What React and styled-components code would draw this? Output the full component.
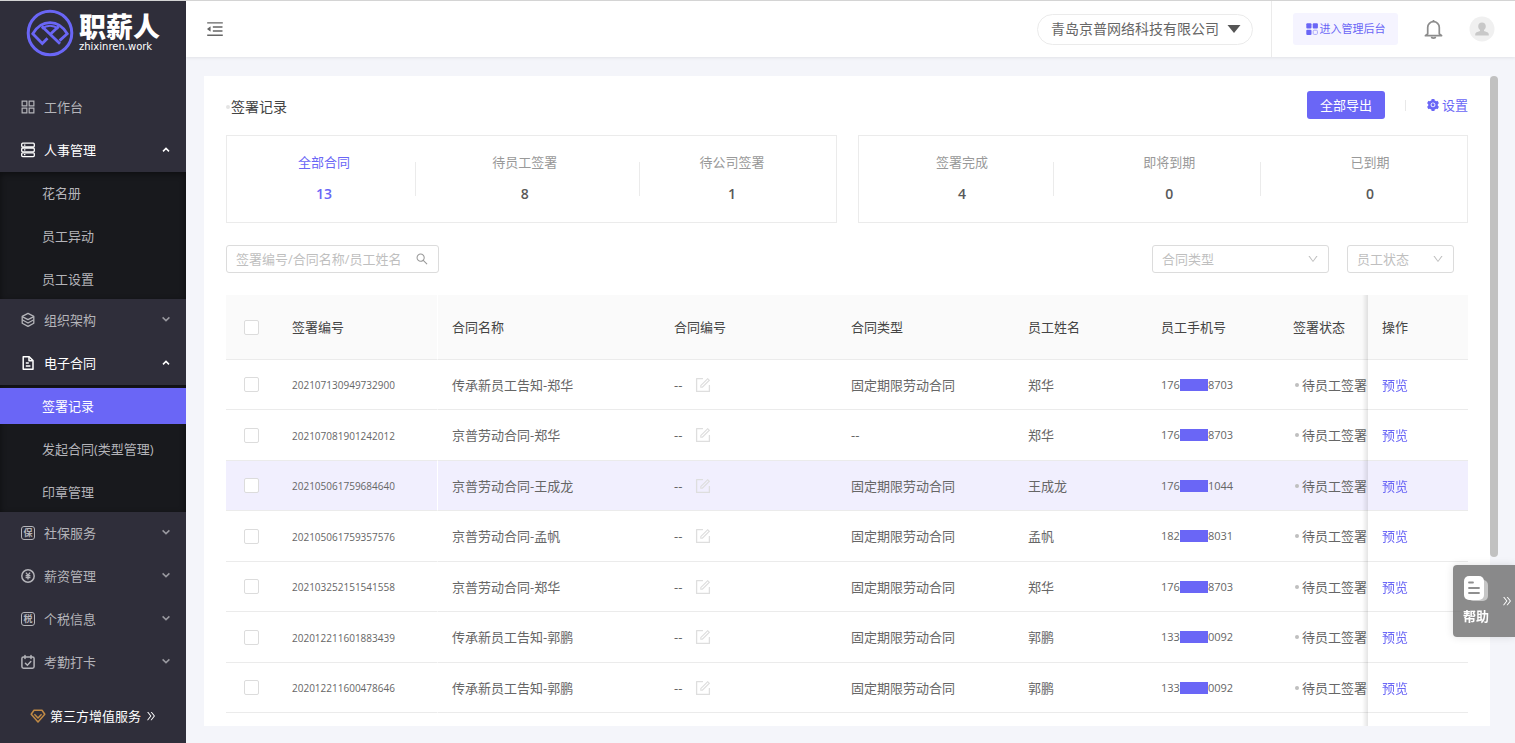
import React, { Fragment, useState } from 'react';
import styled, { createGlobalStyle, css } from 'styled-components';
import {
  AiFillSetting,
  AiOutlineAppstore,
  AiOutlineDoubleRight,
  AiOutlineDown,
  AiOutlineForm,
  AiOutlineMenuFold,
  AiOutlineSearch,
} from 'react-icons/ai';

const stats = [
  [
    { label: '全部合同', value: 13 },
    { label: '待员工签署', value: 8 },
    { label: '待公司签署', value: 1 },
  ],
  [
    { label: '签署完成', value: 4 },
    { label: '即将到期', value: 0 },
    { label: '已到期', value: 0 },
  ],
];

const records = [
  { id: '202107130949732900', name: '传承新员工告知-郑华', type: '固定期限劳动合同', staff: '郑华', phone: ['176', '8703'] },
  { id: '202107081901242012', name: '京普劳动合同-郑华', type: '--', staff: '郑华', phone: ['176', '8703'] },
  { id: '202105061759684640', name: '京普劳动合同-王成龙', type: '固定期限劳动合同', staff: '王成龙', phone: ['176', '1044'] },
  { id: '202105061759357576', name: '京普劳动合同-孟帆', type: '固定期限劳动合同', staff: '孟帆', phone: ['182', '8031'] },
  { id: '202103252151541558', name: '京普劳动合同-郑华', type: '固定期限劳动合同', staff: '郑华', phone: ['176', '8703'] },
  { id: '202012211601883439', name: '传承新员工告知-郭鹏', type: '固定期限劳动合同', staff: '郭鹏', phone: ['133', '0092'] },
  { id: '202012211600478646', name: '传承新员工告知-郭鹏', type: '固定期限劳动合同', staff: '郭鹏', phone: ['133', '0092'] },
];

// icons
const StaffIcon = () => (
  <svg width="16" height="16" viewBox="0 0 16 16" fill="none" stroke="currentColor" strokeWidth="1.3">
    <rect x="1.7" y="1.2" width="12.6" height="3.8" rx="1" />
    <rect x="1.7" y="6" width="12.6" height="3.8" rx="1" />
    <rect x="1.7" y="10.8" width="12.6" height="3.8" rx="1" />
    <path d="M4 3.1h1.4M4 7.9h1.4M4 12.7h1.4" />
  </svg>
);

const LayersIcon = () => (
  <svg width="16" height="16" viewBox="0 0 16 16" fill="none" stroke="currentColor" strokeWidth="1.3" strokeLinejoin="round">
    <path d="M8 1.4 13.8 4.4v6.800L8 14.400l-5.800-3.200V4.400z" />
    <path d="M2.200 4.600 8 7.600l5.800-3M2.200 7.800 8 11l5.800-3.200" />
  </svg>
);

const FileIcon = () => (
  <svg width="16" height="16" viewBox="0 0 16 16" fill="none" stroke="currentColor" strokeWidth="1.5" strokeLinejoin="round">
    <path d="M3.2 1.8h6l3.8 3.8v8.600H3.2z" />
    <path d="M9 2v3.8h3.8M5.8 8h3M5.8 11h4.600" />
  </svg>
);

const SalaryIcon = () => (
  <svg width="16" height="16" viewBox="0 0 16 16" fill="none" stroke="currentColor" strokeWidth="1.5">
    <circle cx="8" cy="8" r="6.2" />
    <path d="M5.9 4.6 8 7.2l2.1-2.6M8 7v4.6M5.6 7.6h4.8M5.6 9.5h4.8" strokeWidth="1.3" />
  </svg>
);

const ClockInIcon = () => (
  <svg width="16" height="16" viewBox="0 0 16 16" fill="none" stroke="currentColor" strokeWidth="1.5" strokeLinecap="round">
    <rect x="1.9" y="3" width="12.2" height="11.2" rx="1.6" />
    <path d="M5 1.4v3M11 1.4v3M5.4 9.2l2 2 3.4-3.6" />
  </svg>
);

const GemIcon = () => (
  <svg width="16" height="16" viewBox="0 0 16 16" fill="none" stroke="#c08a45" strokeWidth="1.5" strokeLinejoin="round">
    <path d="M4 2.2h8l2.8 4L8 14 1.2 6.2z" />
    <path d="M4.4 6.2 8 10l3.6-3.8" />
  </svg>
);

const Chevron = ({ open }) => (
  <svg width="10" height="10" viewBox="0 0 10 10" fill="none" stroke="currentColor" strokeWidth="1.5" opacity={open ? 1 : 0.8}>
    <path d={open ? 'M2 6.4 5 3.4l3 3' : 'M1.6 2.4 5 5.6l3.4-3.2'} />
  </svg>
);

const LogoMark = () => (
  <svg width="48" height="48" viewBox="0 0 48 48" fill="none" stroke="#6a66f6" strokeWidth="2.8">
    <circle cx="24" cy="24" r="21.8" strokeWidth="3" />
    <path d="M21.500 29.200 16.300 34.400 6.800 24.800C15.600 10 32.400 10 41.200 24.800L33.600 31.600" />
    <path d="M15.800 17.200 34 34.800M32.800 17.200 24.600 25" />
    <path d="M15.800 19.600c5-3.400 11.400-3.400 16.600 0" strokeWidth="2" />
  </svg>
);

const BellIcon = () => (
  <svg width="19" height="22" viewBox="0 0 20 22" fill="none" stroke="#8c8c8c" strokeWidth="1.8" strokeLinejoin="round">
    <path d="M3.900 16V9.400a6.100 6.100 0 0 1 12.200 0V16l2.400 2H1.500z" />
    <path d="M10 3.2V1.6M8 19.2a2 1.400 0 0 0 4 0" />
  </svg>
);

const AvatarIcon = () => (
  <svg width="26" height="26" viewBox="0 0 26 26">
    <circle cx="13" cy="13" r="12.5" fill="#f0f0f0" />
    <path fill="#c8c8c8" d="M13 6.4c2.3 0 3.8 1.6 3.8 3.8 0 1.7-.8 3-1.8 3.8v1.1c1.6.6 4 1 4.6 2.5.2.5.2 1.2.2 1.900H6.2c0-.7 0-1.4.2-1.900.6-1.5 3-1.9 4.6-2.5V14c-1-.8-1.8-2.1-1.8-3.8 0-2.2 1.5-3.800 3.800-3.800z" />
  </svg>
);

const BlocksIcon = () => (
  <svg width="12" height="12" viewBox="0 0 12 12" fill="#6a66f6">
    <rect x="0.3" y="0.3" width="5.2" height="5.2" rx="1" />
    <rect x="6.7" y="0.3" width="5.2" height="5.2" rx="1" />
    <rect x="0.3" y="6.7" width="5.2" height="5.2" rx="1" />
    <rect x="7.2" y="7.2" width="4.2" height="4.2" rx="1" fill="none" stroke="#aaa7fa" />
  </svg>
);

const HelpIcon = () => (
  <svg width="26" height="26" viewBox="0 0 26 26">
    <rect x="5" y="4" width="20" height="21" rx="5" fill="#c6c6c6" />
    <rect x="1" y="0" width="20" height="24" rx="5" fill="#fff" />
    <path d="M6 6.5h4M6 12h10M6 17h10" stroke="#8f8f8f" strokeWidth="1.8" strokeLinecap="round" />
  </svg>
);

const menu = [
  { label: '工作台', icon: <AiOutlineAppstore size={18} /> },
  { label: '人事管理', icon: <StaffIcon />, children: ['花名册', '员工异动', '员工设置'] },
  { label: '组织架构', icon: <LayersIcon />, folded: true },
  { label: '电子合同', icon: <FileIcon />, children: ['签署记录', '发起合同(类型管理)', '印章管理'] },
  { label: '社保服务', badge: '保', folded: true },
  { label: '薪资管理', icon: <SalaryIcon />, folded: true },
  { label: '个税信息', badge: '税', folded: true },
  { label: '考勤打卡', icon: <ClockInIcon />, folded: true },
];

const Sidebar = () => {
  const [current, setCurrent] = useState('签署记录');

  return (
    <Aside>
      <Logo>
        <LogoMark />
        <LogoText>
          <LogoName>职薪人</LogoName>
          <LogoSite>zhixinren.work</LogoSite>
        </LogoText>
      </Logo>
      <Nav>
        {menu.map(({ label, icon, badge, children, folded }) => (
          <Fragment key={label}>
            <MenuButton type="button" $open={!!children}>
              <MenuIcon>{badge ? <CharBadge>{badge}</CharBadge> : icon}</MenuIcon>
              <MenuLabel>{label}</MenuLabel>
              {(children || folded) && <Chevron open={!!children} />}
            </MenuButton>
            {children && (
              <SubMenu>
                {children.map((item) => (
                  <SubButton key={item} type="button" $active={item === current} onClick={() => setCurrent(item)}>
                    {item}
                  </SubButton>
                ))}
              </SubMenu>
            )}
          </Fragment>
        ))}
      </Nav>
      <ExtraLink href="#services">
        <GemIcon />
        第三方增值服务
        <AiOutlineDoubleRight size={12} />
      </ExtraLink>
    </Aside>
  );
};

const TopBar = () => (
  <Header>
    <IconButton type="button" aria-label="收起菜单">
      <AiOutlineMenuFold size={20} />
    </IconButton>
    <HeaderRight>
      <Company>
        <CompanySelect aria-label="公司">
          <option>青岛京普网络科技有限公司</option>
        </CompanySelect>
        <svg width="14" height="10" viewBox="0 0 14 10">
          <path d="M0.5 1h13L7 9z" fill="#555" />
        </svg>
      </Company>
      <Account>
        <AdminButton type="button">
          <BlocksIcon />
          进入管理后台
        </AdminButton>
        <IconButton type="button" aria-label="消息">
          <BellIcon />
        </IconButton>
        <IconButton type="button" aria-label="账号">
          <AvatarIcon />
        </IconButton>
      </Account>
    </HeaderRight>
  </Header>
);

const RecordTable = () => (
  <Table>
    <colgroup>
      <Col $width={52} />
      <Col $width={160} />
      <Col />
      <Col $width={177} />
      <Col $width={177} />
      <Col $width={133} />
      <Col $width={132} />
      <Col $width={89} />
      <Col $width={100} />
    </colgroup>
    <thead>
      <tr>
        <Th $check><Checkbox aria-label="全选" /></Th>
        <Th $edge>签署编号</Th>
        <Th>合同名称</Th>
        <Th>合同编号</Th>
        <Th>合同类型</Th>
        <Th>员工姓名</Th>
        <Th>员工手机号</Th>
        <Th>签署状态</Th>
        <Th $fixed>操作</Th>
      </tr>
    </thead>
    <tbody>
      {records.map(({ id, name, type, staff, phone }, i) => (
        <Row key={id} $hover={i === 2}>
          <Td $check><Checkbox aria-label={id} /></Td>
          <Td $edge><Serial>{id}</Serial></Td>
          <Td>{name}</Td>
          <Td>
            <Editable>
              --
              <EditButton type="button" aria-label="编辑"><AiOutlineForm size={18} /></EditButton>
            </Editable>
          </Td>
          <Td>{type}</Td>
          <Td>{staff}</Td>
          <Td>
            <Phone>{phone[0]}<Mask />{phone[1]}</Phone>
          </Td>
          <Td><Status>待员工签署</Status></Td>
          <Td $fixed><TextLink href="#preview">预览</TextLink></Td>
        </Row>
      ))}
      <Row>
        <Td colSpan={8} />
        <Td $fixed />
      </Row>
    </tbody>
  </Table>
);

const App = () => (
  <Layout>
    <GlobalStyle />
    <Sidebar />
    <Content>
      <TopBar />
      <Main>
        <Card>
          <TitleRow>
            <Title>签署记录</Title>
            <Actions>
              <ExportButton type="button">全部导出</ExportButton>
              <Separator />
              <SettingButton type="button">
                <AiFillSetting size={14} />
                设置
              </SettingButton>
            </Actions>
          </TitleRow>
          <StatRow>
            {stats.map((group, g) => (
              <StatGroup key={g}>
                {group.map(({ label, value }, i) => (
                  <Stat key={label} $active={g === 0 && i === 0}>
                    <StatLabel>{label}</StatLabel>
                    <StatValue>{value}</StatValue>
                  </Stat>
                ))}
              </StatGroup>
            ))}
          </StatRow>
          <FilterRow>
            <SearchBox>
              <SearchInput aria-label="搜索" placeholder="签署编号/合同名称/员工姓名" />
              <AiOutlineSearch size={14} />
            </SearchBox>
            <Filters>
              <SelectBox $width={177}>
                <Select aria-label="合同类型"><option>合同类型</option></Select>
                <AiOutlineDown size={12} />
              </SelectBox>
              <SelectBox $width={107}>
                <Select aria-label="员工状态"><option>员工状态</option></Select>
                <AiOutlineDown size={12} />
              </SelectBox>
            </Filters>
          </FilterRow>
          <RecordTable />
        </Card>
        <ScrollTrack><ScrollThumb /></ScrollTrack>
      </Main>
    </Content>
    <Help type="button">
      <HelpBody>
        <HelpIcon />
        帮助
      </HelpBody>
      <AiOutlineDoubleRight size={12} />
    </Help>
  </Layout>
);

const GlobalStyle = createGlobalStyle`
  * {
    box-sizing: border-box;
  }

  body {
    margin: 0;
    color: #666;
    font-family: "Open Sans", "Noto Sans CJK SC", sans-serif;
    font-size: 13px;
    line-height: 20px;
    background: #f4f5fa;
  }

  button, input, select {
    padding: 0;
    border: none;
    outline: none;
    background: none;
    color: inherit;
    font: inherit;
  }

  button {
    cursor: pointer;
  }

  svg {
    flex: none;
  }
`;

const Layout = styled.div`
  display: flex;
  height: 100vh;
  border-top: 1px solid #d4d4d4;
  overflow: hidden;
`;

// sidebar
const Aside = styled.aside`
  display: flex;
  flex-direction: column;
  flex: none;
  width: 186px;
  color: #b4b4b9;
  background: #2f2e3a;
`;

const Logo = styled.div`
  display: flex;
  align-items: center;
  gap: 5px;
  height: 64px;
  margin-bottom: 21px;
  padding-left: 26px;
  color: #fff;
`;

const LogoText = styled.div`
  display: flex;
  flex-direction: column;
`;

const LogoName = styled.span`
  font-size: 27px;
  font-weight: 900;
  line-height: 28px;
`;

const LogoSite = styled.span`
  font-family: "DejaVu Sans", sans-serif;
  font-size: 10px;
  line-height: 12px;
`;

const Nav = styled.nav`
  display: flex;
  flex-direction: column;
  flex: 1;
  min-height: 0;
`;

const MenuButton = styled.button`
  display: flex;
  align-items: center;
  flex: 0 1 43px;
  padding: 0 15px 0 20px;
  color: ${({ $open }) => $open ? '#fff' : 'inherit'};
  text-align: left;
`;

const MenuIcon = styled.span`
  display: flex;
  align-items: center;
  justify-content: center;
  width: 16px;
  margin-right: 8px;
`;

const MenuLabel = styled.span`
  flex: 1;
`;

const CharBadge = styled.span`
  width: 14px;
  height: 14px;
  border: 1px solid currentColor;
  border-radius: 3px;
  font-size: 9px;
  font-weight: 700;
  line-height: 11px;
  text-align: center;
`;

const SubMenu = styled.div`
  display: flex;
  flex-direction: column;
  flex: none;
  gap: 7px;
  padding: 3px 0 2px;
  background: #18191d;
  box-shadow: inset 0 2px 6px rgba(0, 0, 0, 0.45);
`;

const SubButton = styled.button`
  height: 36px;
  padding-left: 42px;
  text-align: left;
  ${({ $active }) => $active && css`
    color: #fff;
    background: #6a66f6;
  `}
`;

const ExtraLink = styled.a`
  display: flex;
  align-items: center;
  gap: 4px;
  height: 60px;
  padding: 6px 0 0 30px;
  color: #fff;
  text-decoration: none;
`;

// header
const Content = styled.div`
  display: flex;
  flex-direction: column;
  flex: 1;
  min-width: 0;
`;

const Header = styled.header`
  display: flex;
  align-items: center;
  justify-content: space-between;
  flex: none;
  height: 56px;
  padding: 0 20px 0 19px;
  background: #fff;
  box-shadow: 0 1px 3px rgba(0, 0, 0, 0.08);
`;

const HeaderRight = styled.div`
  display: flex;
  align-items: center;
  height: 100%;
  gap: 18px;
`;

const IconButton = styled.button`
  display: flex;
  color: #666;
`;

const Company = styled.div`
  display: flex;
  align-items: center;
  width: 216px;
  height: 31px;
  padding: 0 11px 0 13px;
  border: 1px solid #ebebeb;
  border-radius: 16px;
`;

const CompanySelect = styled.select`
  flex: 1;
  min-width: 0;
  appearance: none;
  font-size: 14px;
`;

const Account = styled.div`
  display: flex;
  align-items: center;
  gap: 26px;
  height: 100%;
  padding-left: 21px;
  border-left: 1px solid #ebebeb;
`;

const AdminButton = styled.button`
  display: flex;
  align-items: center;
  justify-content: center;
  gap: 2px;
  width: 105px;
  height: 32px;
  border-radius: 3px;
  color: #6a66f6;
  font-size: 11px;
  background: #f5f4ff;
`;

// page
const Main = styled.main`
  display: flex;
  flex: 1;
  min-height: 0;
  padding: 19px 17px 17px 18px;
`;

const Card = styled.section`
  flex: 1;
  min-width: 0;
  padding: 15px 22px 0;
  background: #fff;
  overflow: hidden;
`;

const ScrollTrack = styled.div`
  width: 8px;
`;

const ScrollThumb = styled.div`
  height: 74%;
  border-radius: 4px;
  background: #c1c1c1;
`;

const TitleRow = styled.div`
  display: flex;
  align-items: center;
  justify-content: space-between;
  height: 28px;
  margin-bottom: 16px;
`;

const Title = styled.h1`
  display: flex;
  align-items: center;
  gap: 1px;
  margin: 0;
  padding-top: 4px;
  color: #444;
  font-size: 14px;
  font-weight: 400;

  &::before {
    content: "";
    width: 4px;
    height: 4px;
    border-radius: 50%;
    background: #e4e4e4;
  }
`;

const Actions = styled.div`
  display: flex;
  align-items: center;
  gap: 20px;
`;

const ExportButton = styled.button`
  width: 78px;
  height: 28px;
  border-radius: 3px;
  color: #fff;
  background: #6a66f6;
`;

const Separator = styled.span`
  width: 1px;
  height: 11px;
  background: #e8e8e8;
`;

const SettingButton = styled.button`
  display: flex;
  align-items: center;
  gap: 2px;
  color: #6a66f6;
`;

const StatRow = styled.div`
  display: flex;
  gap: 21px;
  margin-bottom: 22px;
`;

const StatGroup = styled.div`
  display: flex;
  align-items: center;
  justify-content: space-around;
  flex: 1;
  height: 88px;
  padding-bottom: 2px;
  border: 1px solid #ebebeb;
`;

const Stat = styled.div`
  position: relative;
  display: flex;
  flex-direction: column;
  align-items: center;
  gap: 12px;
  color: ${({ $active }) => $active ? '#6a66f6' : '#999'};

  ${({ $active }) => !$active && css`
    strong {
      color: #595959;
    }
  `}

  &:not(:last-child)::after {
    content: "";
    position: absolute;
    top: 10px;
    left: 225%;
    width: 1px;
    height: 34px;
    background: #ebebeb;
  }
`;

const StatLabel = styled.span`
  white-space: nowrap;
`;

const StatValue = styled.strong`
  color: inherit;
  font-size: 14px;
  font-weight: 600;
`;

const FilterRow = styled.div`
  display: flex;
  justify-content: space-between;
  margin-bottom: 22px;
  padding-right: 14px;
`;

const Field = css`
  display: flex;
  align-items: center;
  height: 28px;
  padding: 0 9px;
  border: 1px solid #dcdcdc;
  border-radius: 3px;
`;

const SearchBox = styled.div`
  ${Field}
  width: 213px;
  color: #999;
`;

const SearchInput = styled.input`
  flex: 1;
  min-width: 0;

  &::placeholder {
    color: #bfbfbf;
  }
`;

const Filters = styled.div`
  display: flex;
  gap: 18px;
`;

const SelectBox = styled.div`
  ${Field}
  width: ${({ $width }) => $width}px;
  color: #bfbfbf;
`;

const Select = styled.select`
  flex: 1;
  min-width: 0;
  appearance: none;
`;

// table
const Table = styled.table`
  width: 100%;
  table-layout: fixed;
  border-spacing: 0;
`;

const Col = styled.col`
  width: ${({ $width }) => $width ? `${$width}px` : 'auto'};
`;

const Cell = css`
  padding: 0 0 0 ${({ $check }) => $check ? 18 : 14}px;
  border-bottom: 1px solid #ebebeb;
  border-right: ${({ $edge }) => $edge ? '1px solid #fff' : 'none'};
  text-align: left;
  white-space: nowrap;

  ${({ $fixed }) => $fixed && css`
    position: sticky;
    right: 0;

    &::before {
      content: "";
      position: absolute;
      top: 0;
      bottom: -1px;
      left: -6px;
      width: 6px;
      background: linear-gradient(to left, rgba(0, 0, 0, 0.1), rgba(0, 0, 0, 0));
    }
  `}
`;

const Th = styled.th`
  ${Cell}
  height: 65px;
  color: #444;
  font-weight: 400;
  background: #fafafa;
`;

const Td = styled.td`
  ${Cell}
  height: 50px;
`;

const Row = styled.tr`
  background: ${({ $hover }) => $hover ? '#f1effe' : '#fff'};

  &:nth-child(even) td {
    height: 51px;
  }
`;

const Checkbox = styled.input.attrs({ type: 'checkbox' })`
  display: block;
  width: 15px;
  height: 15px;
  margin: 0;
  appearance: none;
  border: 1px solid #dcdcdc;
  border-radius: 2px;
  background: #fff;
`;

const Serial = styled.span`
  font-size: 10px;
`;

const Editable = styled.span`
  display: flex;
  align-items: center;
  gap: 12px;
`;

const EditButton = styled.button`
  display: flex;
  color: #dedede;
`;

const Phone = styled.span`
  display: flex;
  align-items: center;
  font-size: 11px;
`;

const Mask = styled.span`
  width: 28px;
  height: 12px;
  background: #6a66f6;
`;

const Status = styled.span`
  display: flex;
  align-items: center;
  gap: 3px;
  padding-left: 2px;

  &::before {
    content: "";
    width: 4px;
    height: 4px;
    border-radius: 50%;
    background: #bfbfbf;
  }
`;

const TextLink = styled.a`
  color: #6a66f6;
  text-decoration: none;
`;

// floating help entry
const Help = styled.button`
  position: fixed;
  right: 0;
  bottom: 106px;
  display: flex;
  align-items: center;
  justify-content: space-between;
  width: 62px;
  height: 72px;
  padding: 0 2px 0 10px;
  border-radius: 4px 0 0 4px;
  color: #fff;
  background: rgba(110, 110, 110, 0.8);
  box-shadow: 0 0 8px rgba(0, 0, 0, 0.12);
`;

const HelpBody = styled.span`
  display: flex;
  flex-direction: column;
  align-items: center;
  gap: 4px;
  font-weight: 700;
`;

export default App;
